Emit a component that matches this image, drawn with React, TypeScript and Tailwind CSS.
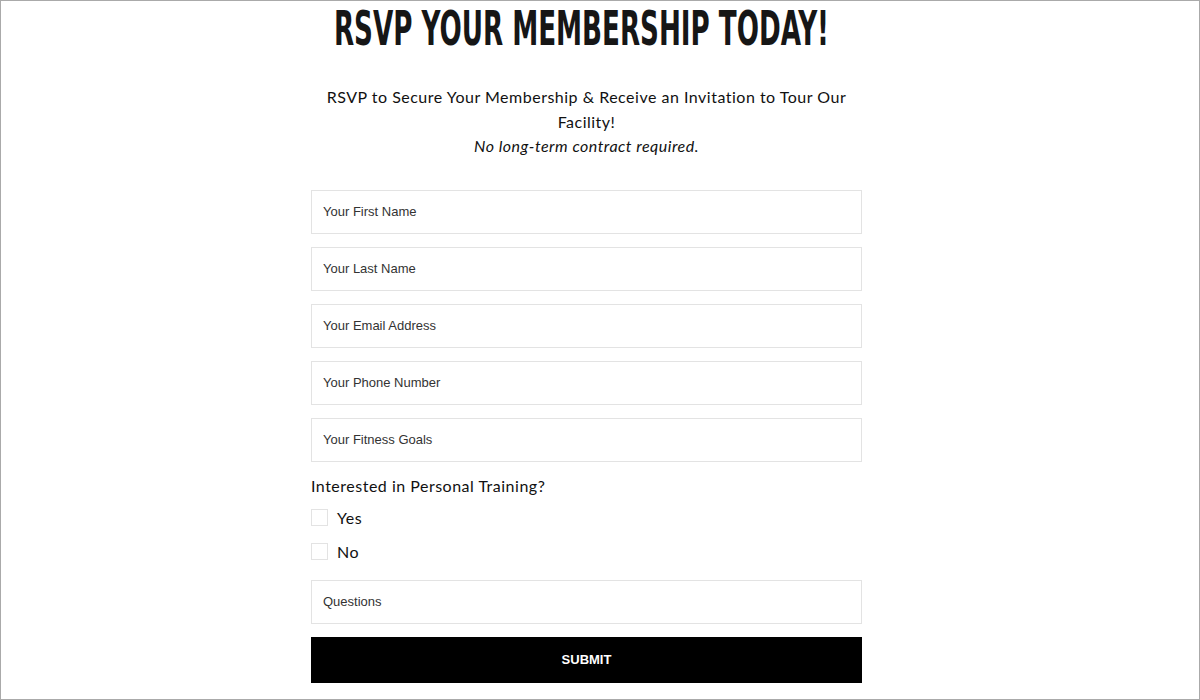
import { useState } from 'react';

const fields = [
  'Your First Name',
  'Your Last Name',
  'Your Email Address',
  'Your Phone Number',
  'Your Fitness Goals',
];

export default function App() {
  const [training, setTraining] = useState<string | null>(null);

  return (
    <div className="h-[700px] w-[1200px] overflow-hidden border border-[#aaaaaa] bg-white">
      <div className="flex justify-center pr-[27px]">
        <div className="w-[551px]">
          {/* Heading */}
          <div className="-mt-[1px] flex h-[56px] justify-center pr-[10px]">
            <h1
              className="inline-block origin-center scale-x-[0.606] whitespace-nowrap text-[48px] font-bold leading-[56px] text-[#161616]"
              style={{ fontFamily: '"DejaVu Sans Condensed", "DejaVu Sans", sans-serif' }}
            >
              RSVP YOUR MEMBERSHIP TODAY!
            </h1>
          </div>

          <div
            className="mt-[29px] text-center text-[16px] leading-[24.5px] tracking-[0.5px] text-[#111]"
            style={{ fontFamily: 'Lato, "Open Sans", sans-serif' }}
          >
            <p>RSVP to Secure Your Membership &amp; Receive an Invitation to Tour Our Facility!</p>
            <p className="italic">No long-term contract required.</p>
          </div>

          <form className="mt-[31px]" style={{ fontFamily: '"Liberation Sans", Arial, sans-serif' }}>
            <div className="flex flex-col gap-[13px]">
              {fields.map(f => (
                <input
                  key={f}
                  placeholder={f}
                  className="h-[44px] w-full border border-[#e3e3e3] px-[11px] text-[13px] text-[#333] placeholder:text-[#333] outline-none"
                />
              ))}
            </div>

            <div className="tracking-[0.5px]" style={{ fontFamily: 'Lato, "Open Sans", sans-serif' }}>
              <p className="mt-[12px] text-[16px] leading-[24px] text-[#111]">Interested in Personal Training?</p>
              <div className="mt-[8px] flex flex-col gap-[10px]">
                {['Yes', 'No'].map(opt => (
                  <label key={opt} className="flex h-[24px] items-center gap-[9px] text-[16px] text-[#111]">
                    <span
                      onClick={() => setTraining(opt)}
                      className={`h-[17px] w-[17px] border border-[#e3e3e3] ${training === opt ? 'bg-black' : 'bg-white'}`}
                    />
                    {opt}
                  </label>
                ))}
              </div>
            </div>

            <input
              placeholder="Questions"
              className="mt-[16px] h-[44px] w-full border border-[#e3e3e3] px-[11px] text-[13px] text-[#333] placeholder:text-[#333] outline-none"
            />

            <button
              type="button"
              className="mt-[13px] h-[46px] w-full bg-black text-[13px] font-bold text-white"
            >
              SUBMIT
            </button>
          </form>
        </div>
      </div>
    </div>
  );
}
